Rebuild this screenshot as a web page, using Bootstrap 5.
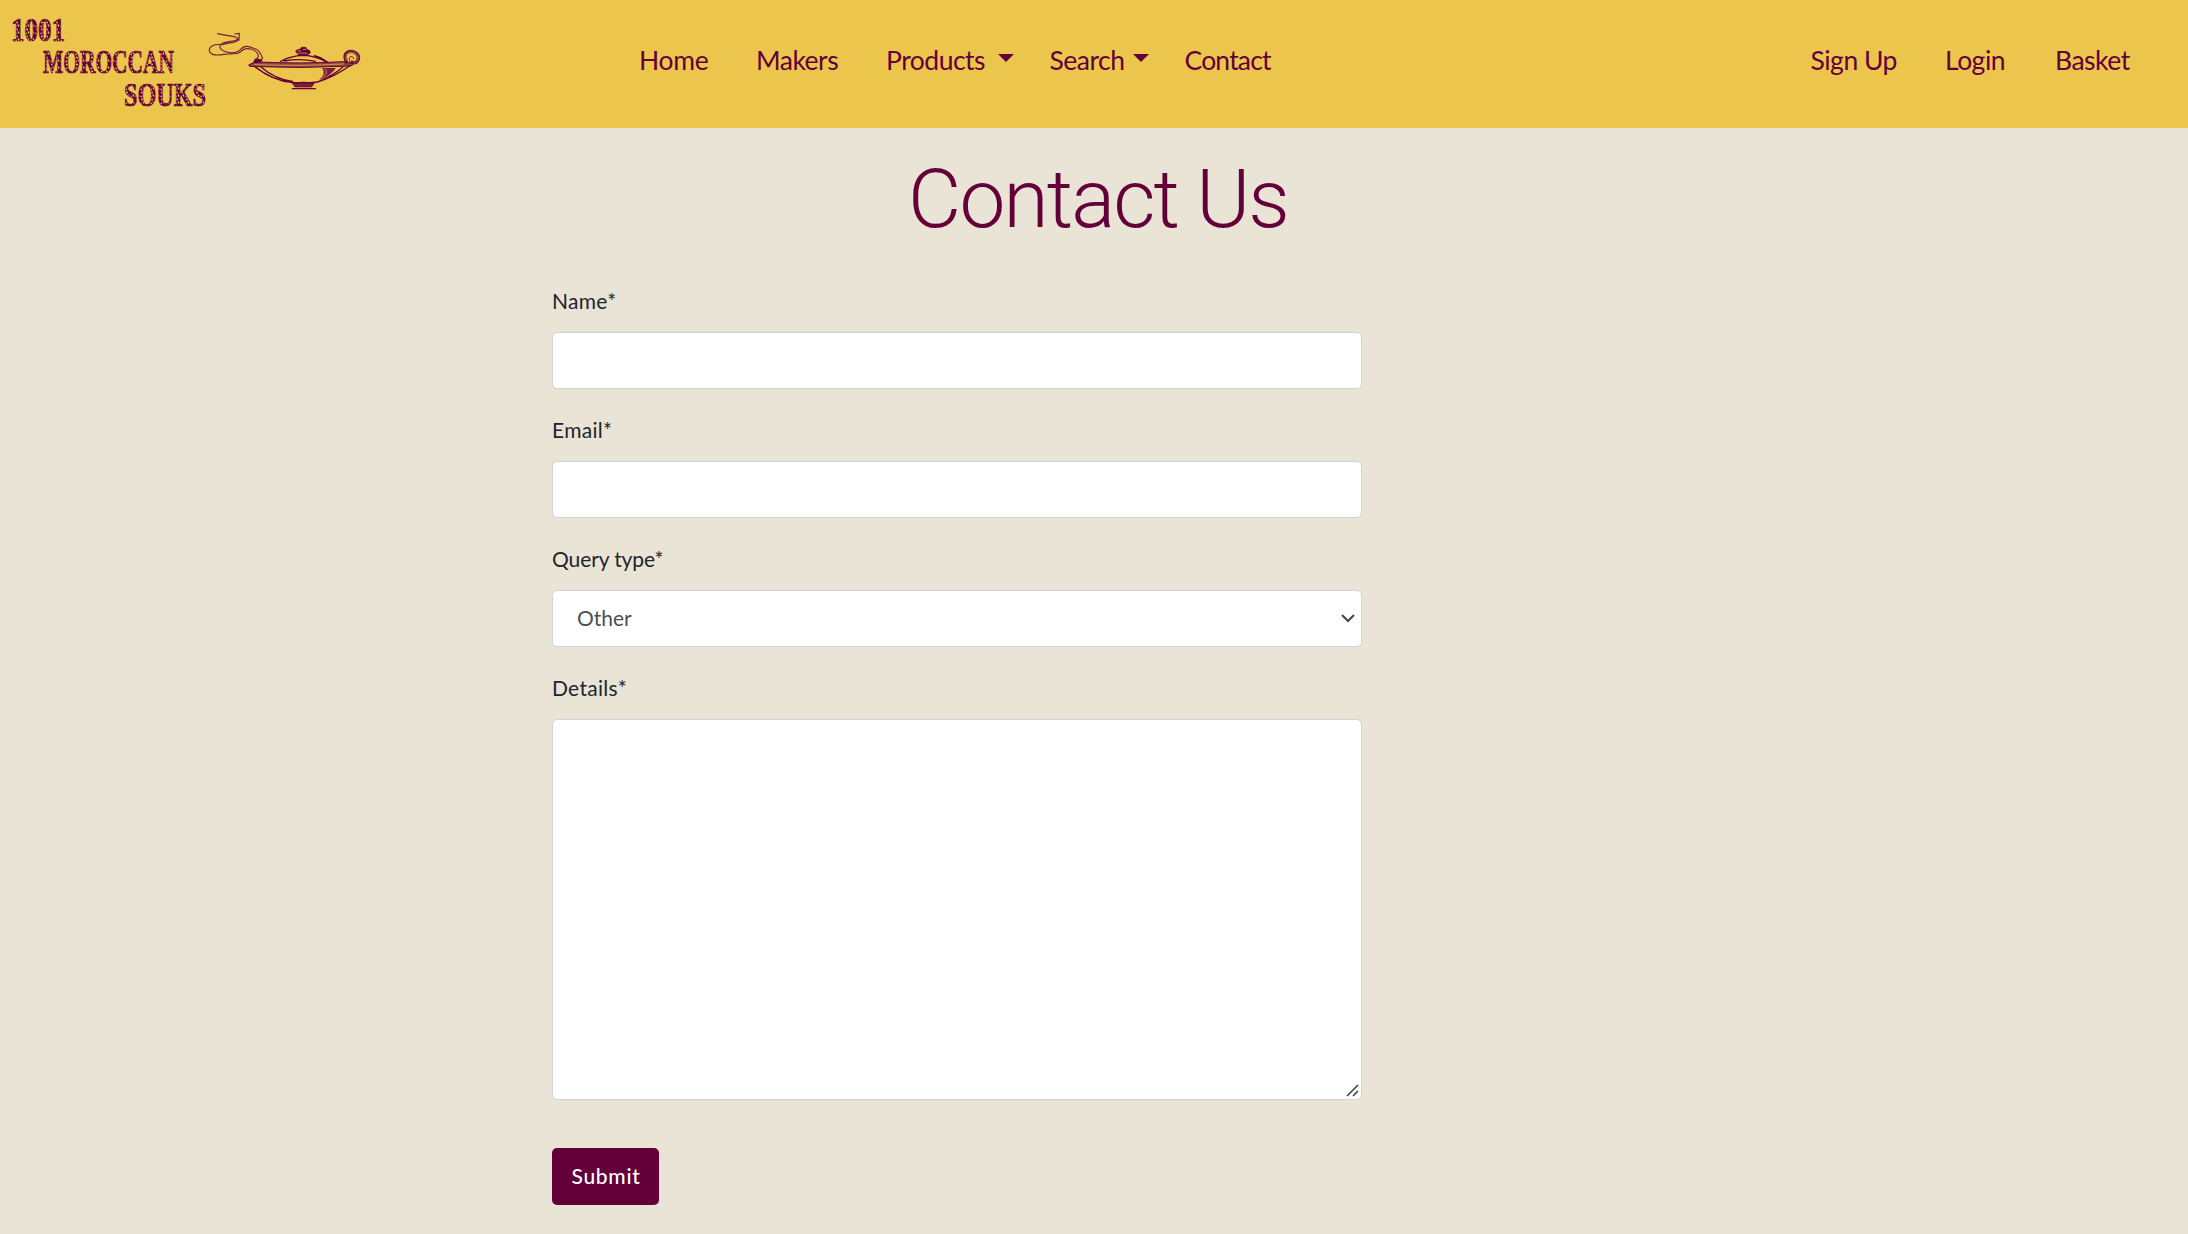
<!DOCTYPE html>
<html lang="en">
<head>
<meta charset="utf-8">
<meta name="viewport" content="width=device-width, initial-scale=1">
<title>Contact Us | 1001 Moroccan Souks</title>
<link href="https://cdn.jsdelivr.net/npm/bootstrap@5.3.0/dist/css/bootstrap.min.css" rel="stylesheet">
<style>
  :root { --souk-plum: #63003a; --souk-gold: #ecc54c; --souk-sand: #eae4d7; }
  body { background: var(--souk-sand); color: #212529; font-family: Lato, "Open Sans", sans-serif; font-size: 21px; line-height: 30px; }
  .site-nav { background: var(--souk-gold); height: 128px; padding: 0; }
  .site-logo { width: 639px; height: 128px; }
  .site-logo svg { display: block; }
  .menu-main, .menu-user { display: grid; font-size: 26.5px; line-height: 40px; letter-spacing: -.5px; margin-top: 40px; white-space: nowrap; }
  .menu-main { grid-template-columns: 117px 130px 163.5px 135px auto; }
  .menu-user { grid-template-columns: 134.5px 110px 133px; }
  .site-nav .nav-link { color: var(--souk-plum); padding: 0; display: flex; }
  .menu-main li:first-child { letter-spacing: -.3px; }
  .menu-main li:last-child { letter-spacing: -.8px; }
  .site-nav .dropdown-toggle::after { border-top: 8px solid; border-left: 8px solid transparent; border-right: 8px solid transparent; margin: 14px 0 0 8px; height: 0; }
  .site-nav .wide-gap::after { margin-left: 12.5px; }
  .page-title { color: var(--souk-plum); font: 300 82px/98px Roboto, sans-serif; letter-spacing: -1.9px; margin: 22px 0 0 8px; }
  .contact-form { width: 810px; margin: 38px 0 0 552px; }
  .contact-form .form-label { display: block; margin-bottom: 16px; letter-spacing: .3px; }
  .contact-form .tight-label { letter-spacing: -.1px; }
  .contact-form .form-control, .contact-form .form-select { border: 1px solid #ced4da; border-radius: 5px; height: 57px; font-size: 21px; color: #495057; background-color: #fff; }
  .contact-form .field-block { height: 129px; }
  .contact-form .form-select { padding: 0 24px 2px; background-image: url("data:image/svg+xml,%3Csvg xmlns='http://www.w3.org/2000/svg' viewBox='0 0 14 9'%3E%3Cpath d='M1 1l6 6 6-6' fill='none' stroke='%23444' stroke-width='2'/%3E%3C/svg%3E"); background-size: 14px 9px; background-position: right 6px center; }
  .contact-form textarea.form-control { height: 381px; resize: none; display: block; }
  .grip { right: 3px; bottom: 3px; }
  .btn-souk { --bs-btn-bg: var(--souk-plum); --bs-btn-color: #fff; --bs-btn-hover-bg: #4d002d; --bs-btn-hover-color: #fff; width: 107px; height: 57px; margin-top: 48px; padding: 0 0 2px 1px; border: 0; border-radius: 5px; font-size: 21px; font-weight: 500; letter-spacing: .7px; }
</style>
</head>
<body>
<nav class="site-nav navbar d-flex flex-nowrap align-items-start justify-content-start">
  <a class="site-logo flex-shrink-0" href="#" aria-label="1001 Moroccan Souks">
    <svg width="380" height="128" viewBox="0 0 380 128">
      <defs>
        <pattern id="speckle" width="5" height="7" patternUnits="userSpaceOnUse">
          <rect width="5" height="7" fill="#63003a"/>
          <path d="M1 1.5h2M3 3.5l1 2M.5 5.5h1.5" stroke="#ecc54c" stroke-width="1.5"/>
        </pattern>
      </defs>
      <g font-family="'Liberation Serif', serif" font-weight="700" font-size="33" fill="url(#speckle)" stroke="#63003a" stroke-width=".7">
        <text x="11" y="40.5" textLength="54" lengthAdjust="spacingAndGlyphs">1001</text>
        <text x="43" y="73" textLength="131" lengthAdjust="spacingAndGlyphs">MOROCCAN</text>
        <text x="124" y="105.5" textLength="82" lengthAdjust="spacingAndGlyphs">SOUKS</text>
      </g>
      <svg x="200" y="20" width="170" height="80" viewBox="0 0 510 240" fill="none" stroke="#63003a" stroke-linecap="round" stroke-linejoin="round">
        <path d="M53 41C70 46 88 46 106 51M104 42l14-2-1 18-11-7M117 55C102 68 77 62 64 72 51 83 70 97 88 98 105 99 116 98 122 88 132 76 148 79 159 84 171 89 174 86 180 98L188 115 181 121M117 60C101 71 79 68 68 74M64 74C42 72 27 79 28 91 30 108 55 106 72 103 90 101 108 104 120 97 130 85 143 84 155 88 170 93 177 101 174 113L165 119" stroke-width="3.4" opacity=".85"/>
        <path d="M160 128L167 117 186 120 181 127" fill="#63003a" stroke-width="3"/>
        <path d="M147 134Q158 126 179 126Q300 132 430 125L459 130 456 137 431 139Q300 145 180 140L150 139Z" fill="#63003a" fill-opacity=".65" stroke-width="3"/>
        <path d="M164 134Q310 139 430 132" stroke="#ecc54c" stroke-width="2"/>
        <path d="M242 124Q272 107 309 106Q348 107 381 127M253 123Q300 114 346 124M343 107Q362 111 382 126" stroke-width="4"/>
        <path d="M287 93Q289 88 302 87L304 82 318 82 319 87Q332 91 331 98L323 105 296 105 291 99Z" fill="#63003a" stroke-width="2"/>
        <path d="M293 92l10 1M310 88h8M294 99l28 1" stroke="#ecc54c" stroke-width="2"/>
        <path d="M163 139Q220 183 275 187Q318 191 352 186Q406 169 449 137M184 142Q228 180 278 184M360 183Q400 166 428 142" stroke-width="4"/>
        <path d="M366 144L408 144Q390 169 357 181Q380 160 366 144Z" fill="#63003a" fill-opacity=".85" stroke="none"/>
        <path d="M375 147Q388 158 368 173" stroke="#ecc54c" stroke-width="2"/>
        <path d="M277 190Q312 182 343 190L335 201 286 201Z" fill="#63003a" fill-opacity=".85" stroke-width="2"/>
        <path d="M277 206H346" stroke-width="4"/>
        <path d="M439 126C424 93 457 88 470 101C482 114 471 133 456 127" stroke-width="10" opacity=".9"/>
        <path d="M439 120C430 97 457 90 470 103C478 114 471 126 461 128" stroke="#ecc54c" stroke-width="1.6"/>
        <path d="M449 125C442 106 460 105 461 116" stroke-width="2.5"/>
      </svg>
    </svg>
  </a>
  <ul class="menu-main list-unstyled mb-0">
    <li><a class="nav-link" href="#">Home</a></li>
    <li><a class="nav-link" href="#">Makers</a></li>
    <li><a class="nav-link dropdown-toggle wide-gap" href="#" role="button">Products</a></li>
    <li><a class="nav-link dropdown-toggle" href="#" role="button">Search</a></li>
    <li><a class="nav-link" href="#">Contact</a></li>
  </ul>
  <ul class="menu-user list-unstyled mb-0 ms-auto">
    <li><a class="nav-link" href="#">Sign Up</a></li>
    <li><a class="nav-link" href="#">Login</a></li>
    <li><a class="nav-link" href="#">Basket</a></li>
  </ul>
</nav>
<main>
  <h1 class="page-title text-center">Contact Us</h1>
  <form class="contact-form">
    <div class="field-block">
      <label class="form-label" for="name">Name*</label>
      <input class="form-control" id="name" type="text">
    </div>
    <div class="field-block">
      <label class="form-label" for="email">Email*</label>
      <input class="form-control" id="email" type="email">
    </div>
    <div class="field-block">
      <label class="form-label tight-label" for="query">Query type*</label>
      <select class="form-select" id="query"><option>Other</option></select>
    </div>
    <div>
      <label class="form-label" for="details">Details*</label>
      <div class="position-relative">
        <textarea class="form-control" id="details"></textarea>
        <svg class="grip position-absolute" width="13" height="13" viewBox="0 0 13 13" stroke="#444" stroke-width="1.6"><path d="M1 12L12 1M7 12l5-5"/></svg>
      </div>
    </div>
    <button class="btn btn-souk" type="button">Submit</button>
  </form>
</main>
<script src="https://cdn.jsdelivr.net/npm/bootstrap@5.3.0/dist/js/bootstrap.bundle.min.js"></script>
</body>
</html>
